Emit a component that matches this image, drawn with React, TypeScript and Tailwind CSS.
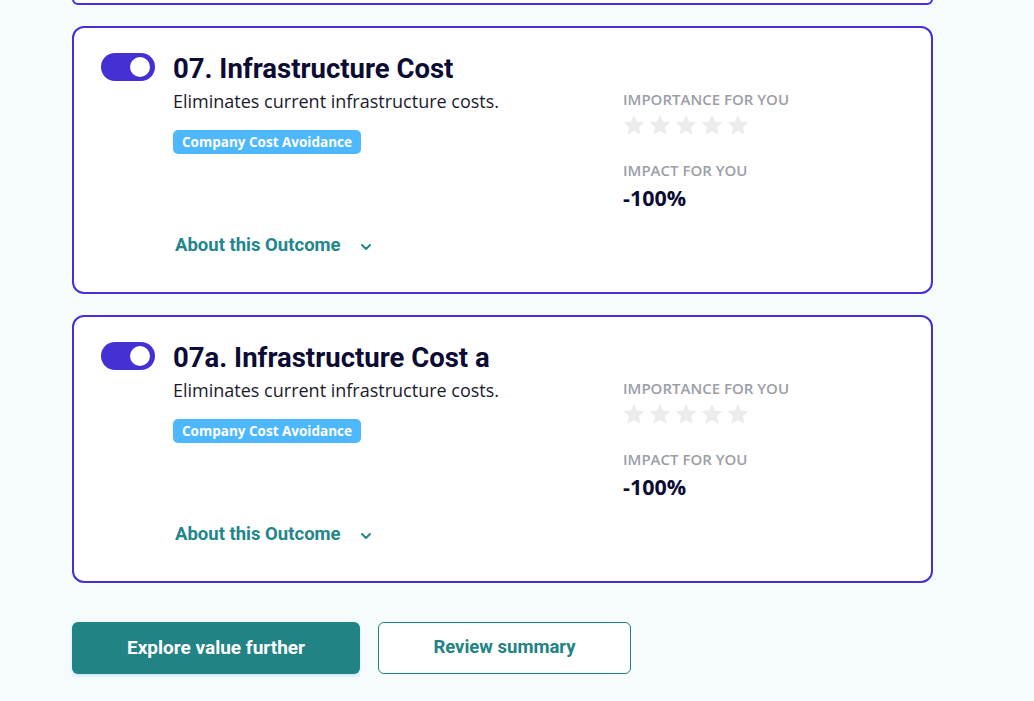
import React from 'react';

const heading = "font-['Roboto',sans-serif]";
const body = "font-['Open_Sans',sans-serif]";

const Star = () => (
  <svg viewBox="0 0 24 24" className="w-[24px] h-[24px] fill-[#ececec]">
    <path d="M12 1.8l3.1 6.6 7.2.9-5.3 5 1.4 7.1L12 17.9l-6.4 3.5 1.4-7.1-5.3-5 7.2-.9z" />
  </svg>
);

const Toggle = () => (
  <div className="w-[54px] h-[28px] rounded-full bg-[#4530d6] flex items-center justify-end pr-[5px] shrink-0">
    <div className="w-[20px] h-[20px] rounded-full bg-white" />
  </div>
);

const OutcomeCard = ({ title }: { title: string }) => (
  <div className="bg-white border-2 border-[#4530d6] rounded-[12px] h-[268px] pl-[27px] pt-[24px] flex gap-[18px]">
    <div className="pt-[1px]">
      <Toggle />
    </div>
    <div className="flex-1">
      <h2 className={`${heading} font-bold text-[27.5px] leading-[32px] mt-[1px] text-[#0b0b33]`}>{title}</h2>
      <div className="flex mt-[4px]">
        <div className="w-[450px]">
          <p className={`${body} text-[18px] leading-[25px] text-[#1a1a2e]`}>Eliminates current infrastructure costs.</p>
          <span className={`${body} inline-block mt-[16px] bg-[#4db8ff] text-white text-[13.5px] font-bold leading-[24px] px-[9px] rounded-[5px]`}>
            Company Cost Avoidance
          </span>
          <button className={`${heading} mt-[79px] ml-[2px] flex items-center gap-[17px] text-[#22868a] font-bold text-[18.5px] leading-[24px]`}>
            About this Outcome
            <svg viewBox="0 0 24 24" className="w-[16px] h-[16px] mt-[3px]" fill="none" stroke="currentColor" strokeWidth="3" strokeLinecap="round" strokeLinejoin="round">
              <path d="M6 9l6 6 6-6" />
            </svg>
          </button>
        </div>
        <div>
          <div className={`${body} text-[15px] leading-[20px] font-semibold text-[#9a9ea6] uppercase`}>Importance for you</div>
          <div className="flex gap-[2px] mt-[4px] ml-[-1px]">
            <Star />
            <Star />
            <Star />
            <Star />
            <Star />
          </div>
          <div className={`${body} mt-[23px] text-[15px] leading-[20px] font-semibold text-[#9a9ea6] uppercase`}>Impact for you</div>
          <div className={`${body} mt-[4px] text-[21.5px] leading-[28px] font-bold text-[#0b0b33]`}>-100%</div>
        </div>
      </div>
    </div>
  </div>
);

const App = () => {
  return (
    <div className="min-h-screen bg-[#f6fcfc] pl-[72px] w-[1034px] h-[701px] overflow-hidden">
      <div className="w-[861px]">
        <div className="h-[6px] mt-[-1px] bg-white border-2 border-t-0 border-[#4530d6] rounded-b-[12px]" />
        <div className="mt-[21px] flex flex-col gap-[21px]">
          <OutcomeCard title="07. Infrastructure Cost" />
          <OutcomeCard title="07a. Infrastructure Cost a" />
        </div>
        <div className="mt-[39px] flex gap-[18px]">
          <button className={`${heading} w-[288px] h-[52px] rounded-[6px] bg-[#218383] text-white font-bold text-[19px] shadow-[0_2px_3px_rgba(120,190,255,0.35)]`}>
            Explore value further
          </button>
          <button className={`${heading} w-[253px] h-[52px] rounded-[6px] bg-white border border-[#218383] text-[#218383] font-bold text-[18.5px]`}>
            Review summary
          </button>
        </div>
      </div>
    </div>
  );
};

export default App;
